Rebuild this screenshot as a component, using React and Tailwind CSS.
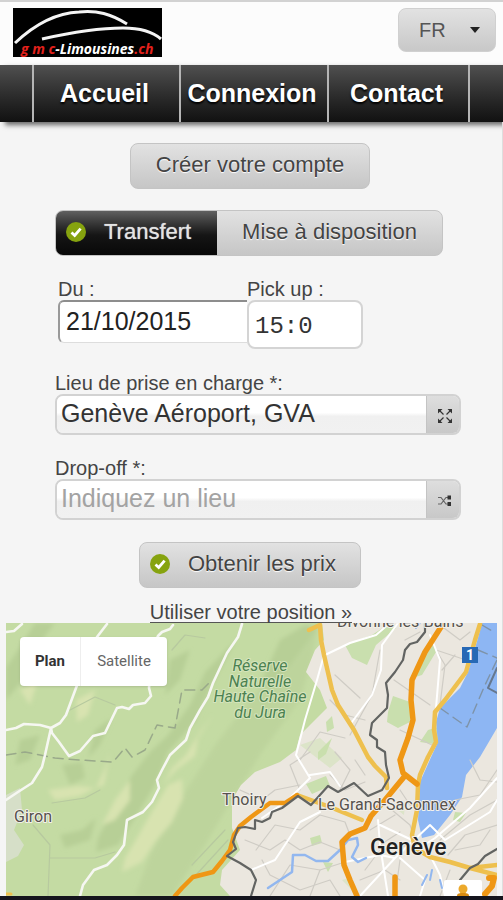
import React from "react";

const buttonLook =
  "rounded-lg border border-[#c4c4c4] bg-linear-to-b from-[#e2e2e2] to-[#c6c6c6] text-[22px] leading-7 text-[#444] [text-shadow:0_1px_1px_#fff]";

function Check() {
  return (
    <svg viewBox="0 0 20 20" className="size-5 shrink-0" aria-hidden="true">
      <circle cx="10" cy="10" r="10" fill="#86a30f" />
      <path d="M5.5 10.5 8.7 13.5 14.6 6.6" fill="none" stroke="#fff" strokeWidth="2.8" />
    </svg>
  );
}

function Logo() {
  return (
    <svg viewBox="0 0 149 49" className="h-[49px] w-[149px]" role="img" aria-label="gmc-Limousines.ch">
      <rect width="149" height="49" fill="#000" />
      <path d="M2 35C20 18 42 5 66 4 84 2 98 6 114 16" fill="none" stroke="#f4f4f4" strokeWidth="3" />
      <path d="M29 31C60 24 86 20 110 20 128 20 140 24 148 31" fill="none" stroke="#f4f4f4" strokeWidth="3" />
      <text x="8" y="46" fill="#fff" fontFamily="Open Sans" fontStyle="italic" fontWeight="700" fontSize="14">
        <tspan fill="#e3211c">g m c</tspan>-Limousines<tspan fill="#e3211c">.ch</tspan>
      </text>
    </svg>
  );
}

function NavItem({ children }) {
  return (
    <a
      href="#"
      className="flex items-center justify-center border-r-2 border-[#b5b5b5] pr-1 text-[25px] font-bold text-white [text-shadow:0_2px_2px_#000]"
    >
      {children}
    </a>
  );
}

function PlaceField({ id, label, value, placeholder, action, icon }) {
  return (
    <div>
      <label htmlFor={id} className="block text-xl leading-[22px] text-[#444]">{label}</label>
      <div className="flex h-[41px] overflow-hidden rounded-lg border-2 border-[#d2d2d2]">
        <input
          id={id}
          defaultValue={value}
          placeholder={placeholder}
          className="min-w-0 flex-1 bg-linear-to-b from-white from-45% via-[#f0f0f0] via-55% to-[#f1f1f1] px-1 pb-0.5 text-[25px] text-[#333] outline-none placeholder:text-[#a3a3a3]"
        />
        <button
          type="button"
          aria-label={action}
          className="flex w-[33px] items-center justify-center border-l border-[#c4c4c4] bg-linear-to-b from-[#dedede] to-[#c8c8c8] pt-0.5 pl-1 text-[#333]"
        >
          {icon}
        </button>
      </div>
    </div>
  );
}

const expandIcon = (
  <svg viewBox="0 0 14 14" className="size-3.5" aria-hidden="true">
    <path d="M0 0h4.5L0 4.5zM14 0v4.5L9.5 0zM0 14V9.5L4.5 14zM14 14H9.5L14 9.5z" fill="currentColor" />
    <path d="M1 1l4.5 4.5M13 1 8.5 5.5M1 13l4.5-4.5M13 13 8.500 8.500" stroke="currentColor" strokeWidth="1.2" />
  </svg>
);

const shuffleIcon = (
  <svg viewBox="0 0 14 12" className="h-3 w-3.5" aria-hidden="true">
    <path d="M0 2.500h3L8 9h3M0 9h3l5-6.500h3" fill="none" stroke="#666" strokeWidth="1.2" />
    <path d="M9.500 0.500h3.500v4H9.500zM9.500 7h3.500v4H9.500z" fill="currentColor" />
  </svg>
);

function Terrain() {
  return (
    <g>
      <defs>
        <filter id="relief" x="-5%" y="-5%" width="110%" height="110%">
          <feGaussianBlur stdDeviation="2" />
        </filter>
      </defs>
      <rect x="6" y="623" width="491" height="273" fill="#c4dba3" />
      <g filter="url(#relief)">
        <g fill="#b5cd95" opacity=".85">
          <path d="M318 623 250 700 215 745 180 800 150 855 135 896H172L205 845 232 800 262 752 300 700 312 660Z" opacity=".5" />
          <path d="M236 640 205 672 190 705 168 735 150 752 132 775 118 800 98 838 96 852 118 845 140 810 155 785 168 752 195 722 212 685Z" />
          <path d="M6 700 30 672 42 640 55 623H35L18 650 6 668Z" />
          <path d="M62 765 82 762 85 778 70 785ZM60 835 82 830 96 818 90 840 65 848Z" />
          <path d="M280 640 305 625 318 628 288 668 270 690 262 680Z" />
          <path d="M95 730 112 718 100 745 88 758ZM20 740 40 735 30 760 15 765ZM170 660 190 650 180 680 165 695Z" />
        </g>
        <g fill="#d8e3b0">
          <path d="M182 779 168 785 150 815 137 838 125 858 122 872 142 862 155 842 172 822 183 798Z" />
          <path d="M213 715 200 732 186 755 172 768 163 785 176 770 195 756 198 738Z" />
          <path d="M48 790 78 786 95 788 80 796 55 800ZM105 768 110 752 104 785 96 788Z" />
          <path d="M76 700 95 690 88 715 77 722ZM20 690 38 680 30 705Z" />
          <path d="M130 800 115 820 102 825 115 800 130 780Z" />
        </g>
      </g>
      <path d="M6 795 20 788 22 810 14 830 24 845 18 856 6 862Z" fill="#d6dfc8" />
      <path
        d="M322 623 324 640 315 650 306 672 320 690 327 708 310 725 300 735 296 750 280 762 255 772 241 785 232 800 232 828 240 850 222 870 220 885 230 896H497V623Z"
        fill="#ebe7df"
      />
      <g fill="#c9dfae">
        <path d="M345 645 372 635 390 623 396 628 376 645 367 665 352 658ZM418 668 432 640 436 652 422 675 412 678Z" />
        <path d="M388 712 393 696 410 702 410 722 398 728 387 722ZM428 730 442 726 440 745 420 742Z" />
        <path d="M326 722 332 716 334 728 327 732ZM318 752 332 738 326 754 318 760Z" />
        <path d="M306 784 326 776 330 786 312 794ZM310 838 320 835 322 843 312 846ZM323 862 333 863 328 872ZM455 812 466 813 460 822 453 820Z" />
        <path d="M300 745 320 738 342 758 330 768ZM395 808 405 803 404 815ZM342 880 350 878 352 890Z" opacity=".45" />
      </g>
      <path
        d="M482 623 478 638 468 672 460 688 440 708 436 722 438 742 432 755 420 782 418 820 422 838 434 835 450 815 462 797 466 775 480 757 497 728V623Z"
        fill="#8db6f3"
      />
    </g>
  );
}

function Roads() {
  return (
    <g fill="none" strokeLinejoin="round" strokeLinecap="round">
      <g stroke="#cfccc5" strokeWidth="1.2">
        <path d="M335 675 360 698M300 760 320 732 345 738M350 735 372 695 380 650M430 640 445 665 440 705M394 680 430 705M400 730 432 745M436 650 466 660M455 655 442 670" />
        <path d="M256 850 275 825 300 830 320 815 345 822M270 896 290 865 320 870M300 790 290 765 310 752M330 775 345 790 365 782M345 822 350 835M380 800 410 825 415 840M400 790 412 808" />
        <path d="M262 860 270 875 300 890 330 880 340 896M365 870 380 850 410 845M440 840 470 815 497 800M448 855 465 835 497 825M395 896 400 860M450 870 440 896M310 896 320 870 345 862M470 760 480 780 497 782" />
        <path d="M335 752 350 770 340 790M355 760 365 775M455 800 480 795 497 770M370 830 395 815M380 845 400 832" />
        <path d="M240 790 262 800 275 790 300 785M245 840 270 850 285 840 300 850 320 842 340 850M360 880 385 870 400 880M455 850 480 845 490 830M330 700 345 715 365 720M405 640 420 632M440 625 460 640 470 632" />
      </g>
      <g stroke="#b7c99f" strokeWidth="1.2">
        <path d="M52 803 85 798 100 790M33 825 50 845 48 896M50 858 95 858 115 852M172 650 185 635 205 638M70 710 95 697 115 705M192 865 225 830M196 875 228 840" />
      </g>
      <g stroke="#99a98a" strokeWidth="1.5" strokeDasharray="10 6">
        <path d="M6 755 25 752 55 758 80 760 113 762 125 748 132 757 145 750 157 725 175 728 182 690 202 690 212 680" />
      </g>
      <g stroke="#7e93a8" strokeWidth="1.4" strokeDasharray="10 6">
        <path d="M440 708 467 727 485 685 497 660M478 650 497 658M482 625 494 632" />
      </g>
      <path d="M497 668 488 688 497 693" stroke="#66788f" strokeWidth="2" />
      <g stroke="#f6f7f2" strokeWidth="2.6">
        <path d="M6 632 14 631 22 624M107 624 97 637 85 665 76 688 66 715 60 723 51 728 52 733 59 742 69 756 80 751 93 736 105 733 117 708 122 707 129 709 133 705 145 703 151 696 149 688 152 650 158 636 162 632 170 629 173 625" />
        <path d="M6 730 16 728 24 724 40 725 51 728 45 755 42 767 32 783 18 792 6 800" />
        <path d="M242 624 238 637 227 653 213 683 208 697 200 710 190 728 186 740 170 755 162 770 157 780 159 788 152 802 143 812 127 820 124 845 117 855 107 865 94 870 83 885 80 896" />
      </g>
      <g stroke="#fff" strokeWidth="2">
        <path d="M324 655 317 680 305 720 296 755 310 778 288 800 262 818M325 655 350 643 376 635 390 623M352 722 372 695 381 670 382 645 398 623M430 635 440 660 436 708M310 775 330 772 340 786" />
        <path d="M251 870 275 860 300 822 320 812M345 862 380 855 395 858 430 825 445 840 490 812 497 800M395 858 360 896M378 820 380 845 388 896M380 825 412 840M400 858 425 880 420 896M430 855 440 875 445 896M420 848 435 838 470 808 497 778" />
      </g>
      <path d="M268 888 280 880 292 872 293 855 305 855 316 861 328 861 340 850 348 840 357 838 358 845 352 857 358 862 366 858" stroke="#92b7ef" strokeWidth="2.5" />
      <path d="M420 623 416 628M432 870 430 880M427 875 422 885M440 880 442 888" stroke="#92b7ef" strokeWidth="2" />
      <g stroke="#eec04e" strokeWidth="4.5">
        <path d="M309 630 320 625 321 640 324 655 332 690 338 705 354 730 368 757 375 766 386 777 387 788" />
        <path d="M480 624 475 640 466 672 445 700 435 712 434 730 436 742 428 757 420 775 418 785 417 810 412 835 415 848 430 857 450 862 470 868 497 865M470 868 497 875" />
        <path d="M297 795 330 807 362 820" />
      </g>
      <path d="M6 894h5" stroke="#eec04e" strokeWidth="3" />
      <g stroke="#ef9715">
        <path d="M175 896 182 888 193 877 213 872 222 861 230 850 234 835 240 826 251 817 270 803 285 803 297 795" strokeWidth="4.5" />
        <path d="M443 623 441 627 425 652 412 680 411 700 413 720 408 738 400 760 403 773 417 784M404 777 385 800 371 816 365 828 350 834 342 842 344 865 350 880 357 896M395 877V896" strokeWidth="5.5" />
        <path d="M489 878 494 878 492 886 485 894" strokeWidth="6" />
      </g>
      <g stroke="#626462" strokeWidth="2.2">
        <path d="M425 623 425 632 417 642 410 644 405 650 403 660 395 672 386 683 388 695 387 708 382 713 372 723 370 735 377 740 377 747 385 752 386 765 389 778 382 790 368 796 354 783 338 792 328 786 311 805 298 796 282 808 272 812 270 818 262 822 255 820 255 829 245 827 238 828 233 842 236 849 227 856 240 863 251 870 256 880 251 896" />
        <path d="M497 849 485 856 478 864 470 868 460 880" />
      </g>
    </g>
  );
}

function MapLabels() {
  return (
    <g fontFamily="Roboto" fontSize="16" fill="#56524e" stroke="#f2f0ea" strokeWidth="2" paintOrder="stroke" strokeLinejoin="round">
      <text x="337" y="627">Divonne-les-Bains</text>
      <text x="14" y="822">Giron</text>
      <text x="222" y="805">Thoiry</text>
      <text x="318" y="810">Le Grand-Saconnex</text>
      <text x="370" y="855" fontSize="23" fontWeight="500" fill="#222">Genève</text>
      <g fontStyle="italic" fill="#4b8150" stroke="#d5e4bd" textAnchor="middle">
        <text x="260" y="671">Réserve</text>
        <text x="260" y="687">Naturelle</text>
        <text x="260" y="702">Haute Chaîne</text>
        <text x="260" y="718">du Jura</text>
      </g>
      <g stroke="none">
        <rect x="462" y="647" width="16" height="16" fill="#2769b5" />
        <text x="470" y="660" fontSize="14" fontWeight="700" fill="#fff" textAnchor="middle">1</text>
      </g>
    </g>
  );
}

function MapPanel() {
  return (
    <section aria-label="Carte" className="relative mr-[5px] ml-1.5 h-[273px] overflow-hidden">
      <svg viewBox="6 623 491 273" preserveAspectRatio="xMidYMid slice" className="block size-full">
        <Terrain />
        <Roads />
        <MapLabels />
      </svg>
      <div className="absolute top-3.5 left-3.5 flex h-[49px] overflow-hidden rounded-sm bg-white font-[Roboto,sans-serif] text-[15px] shadow">
        <button type="button" className="w-[61px] border-r border-[#eee] font-bold text-[#333]">Plan</button>
        <button type="button" className="w-[86px] text-[#666]">Satellite</button>
      </div>
      <button
        type="button"
        aria-label="Street View"
        className="absolute right-[15px] bottom-0 flex h-4 w-[38px] items-end justify-center rounded-t-xs bg-white"
      >
        <svg viewBox="0 0 16 12" className="h-3 w-4" aria-hidden="true">
          <circle cx="8" cy="5" r="4.5" fill="#eca92c" />
          <path d="M2 12c0-3 3-3 6-3s6 0 6 3z" fill="#d98b12" />
        </svg>
      </button>
    </section>
  );
}

export default function App() {
  return (
    <div className="min-h-screen border-t-2 border-[#d2d2d2] bg-[#f5f5f5] font-['Liberation_Sans',Arial,sans-serif]">
      <header>
        <div className="flex h-[63px] items-start justify-between bg-[#fcfcfc] pt-1.5 pr-[7px] pl-[13px]">
          <Logo />
          <div className="relative">
            <select
              aria-label="Langue"
              className="h-11 w-[98px] appearance-none rounded-lg border border-[#d0d0d0] bg-linear-to-b from-[#e2e2e2] to-[#c8c8c8] pl-5 text-xl text-[#555]"
            >
              <option>FR</option>
            </select>
            <svg viewBox="0 0 10 6" className="pointer-events-none absolute top-[19px] right-4 h-1.5 w-2.5" aria-hidden="true">
              <path d="M0 0h10L5 6z" fill="#222" />
            </svg>
          </div>
        </div>
        <nav className="grid h-[57px] grid-cols-[34fr_147fr_148fr_141fr_33fr] bg-linear-to-b from-[#505050] to-[#111] shadow-[5px_3px_5px_#666]">
          <span className="border-r-2 border-[#b5b5b5]" />
          <NavItem>Accueil</NavItem>
          <NavItem>Connexion</NavItem>
          <NavItem>Contact</NavItem>
        </nav>
      </header>

      <main className="border-r border-[#dedede]">
        <form onSubmit={(e) => e.preventDefault()} className="pt-[21px]">
          <div className="flex justify-center pr-0.5">
            <button type="button" className={`${buttonLook} h-[46px] w-[240px] pb-0.5`}>Créer votre compte</button>
          </div>

          <div className="pr-[41px] pl-[55px]">
            <div role="radiogroup" aria-label="Service" className={`${buttonLook} mt-[21px] flex h-[46px] w-[388px] max-w-full overflow-hidden`}>
              <label className="flex w-[161px] items-center gap-[18px] bg-linear-to-b from-[#606060] via-[#151515] via-55% to-[#080808] pb-0.5 pl-2.5 text-[#e4e4e4] [text-shadow:0_0_1px_#ccc]">
                <input type="radio" name="service" defaultChecked className="sr-only" />
                <Check />
                Transfert
              </label>
              <label className="flex flex-1 items-center justify-center pb-0.5">
                <input type="radio" name="service" className="sr-only" />
                Mise à disposition
              </label>
            </div>

            <div className="mt-[22px] flex items-start pl-[3px] text-[#444]">
              <div className="w-[189px]">
                <label htmlFor="date" className="block text-xl leading-[22px]">Du :</label>
                <input
                  id="date"
                  defaultValue="21/10/2015"
                  className="block h-[43px] w-full rounded-l-md border-t-2 border-b border-l-2 border-t-[#8d8d8d] border-b-[#ddd] border-l-[#999] bg-white px-1.5 pb-0.5 text-[25px] text-[#222] outline-none"
                />
              </div>
              <div className="w-[116px]">
                <label htmlFor="pickup" className="block text-xl leading-[22px]">Pick up :</label>
                <input
                  id="pickup"
                  defaultValue="15:0"
                  className="block h-[49px] w-full rounded-lg border-2 border-[#d4d4d4] bg-white px-1.5 pt-1 font-['Liberation_Mono',monospace] text-2xl text-[#333] outline-none"
                />
              </div>
            </div>

            <div className="mt-[23px] flex flex-col gap-[22px]">
              <PlaceField id="from" label="Lieu de prise en charge *:" value="Genève Aéroport, GVA" action="Agrandir" icon={expandIcon} />
              <PlaceField id="to" label="Drop-off *:" placeholder="Indiquez un lieu" action="Échanger" icon={shuffleIcon} />
            </div>
          </div>

          <div className="mt-[22px] flex justify-center pr-0.5">
            <button type="submit" className={`${buttonLook} flex h-[46px] w-[222px] items-center gap-[18px] pb-0.5 pl-2.5`}>
              <Check />
              Obtenir les prix
            </button>
          </div>
          <div className="flex h-[35px] items-end justify-center">
            <a href="#" className="border-b border-[#555] text-xl leading-5 text-[#444]">Utiliser votre position »</a>
          </div>
        </form>
        <MapPanel />
      </main>
      <footer className="h-1 bg-[#15151d]" />
    </div>
  );
}
